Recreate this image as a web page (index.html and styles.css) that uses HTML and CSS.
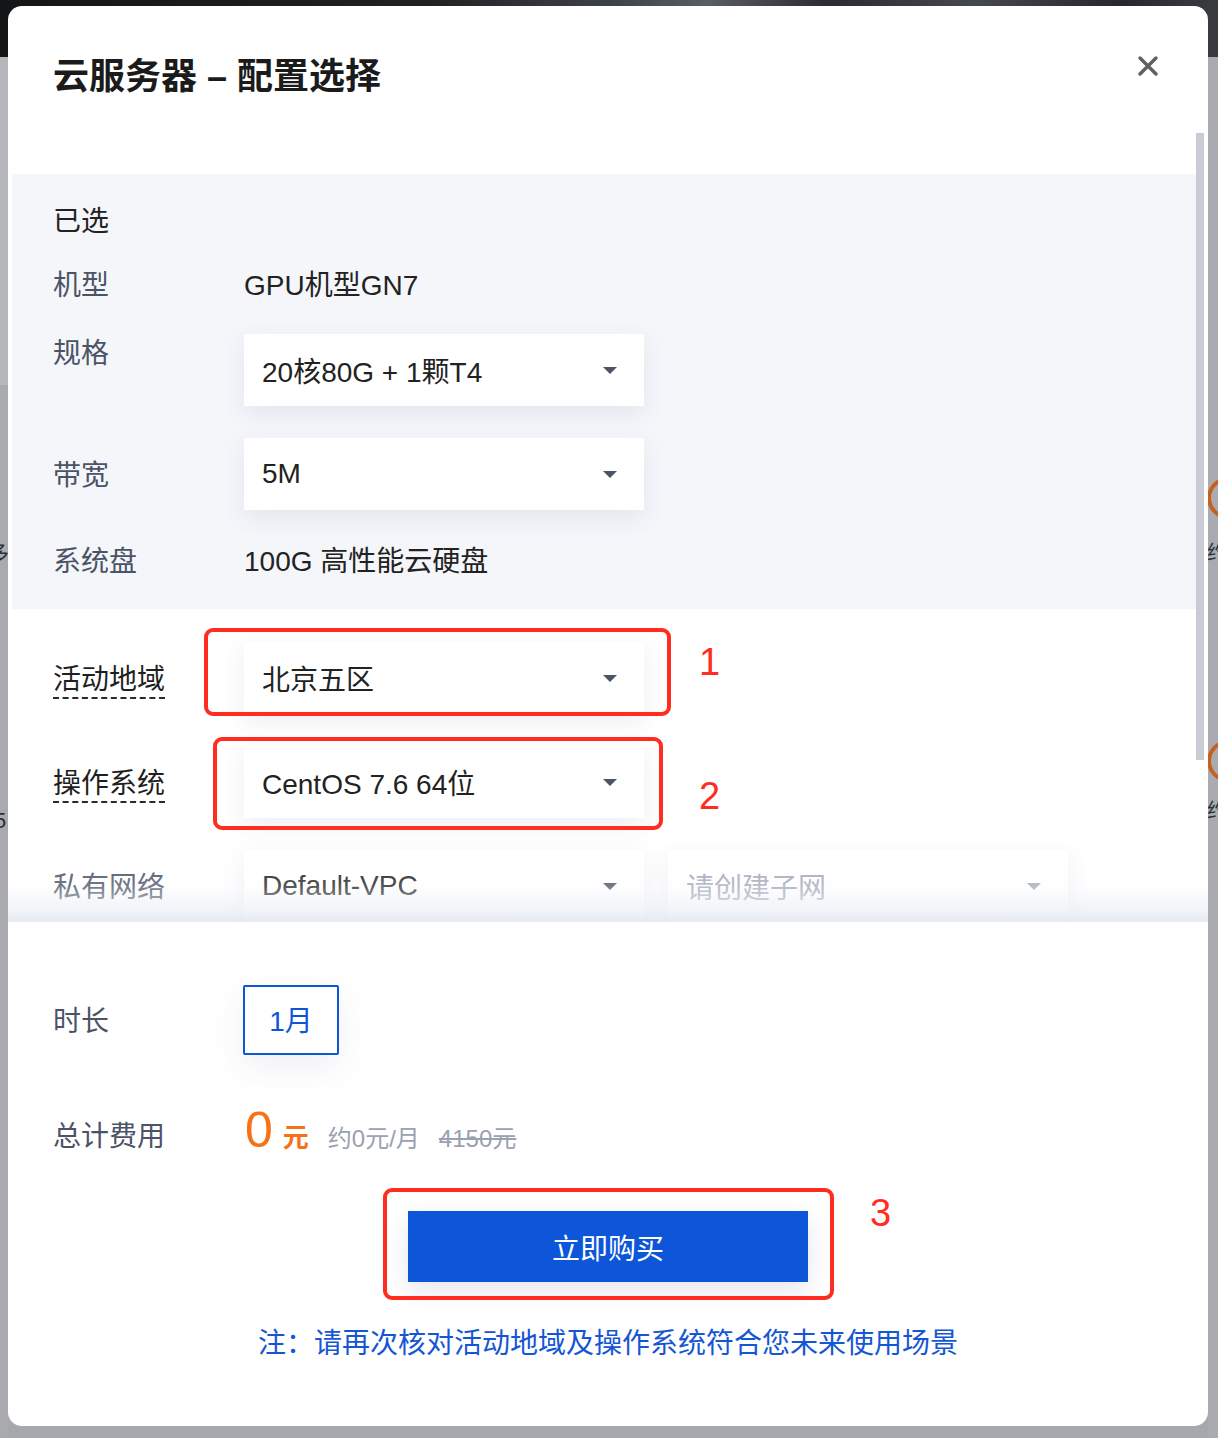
FILE: index.html
```html
<!DOCTYPE html>
<html lang="zh-CN">
<head>
<meta charset="utf-8">
<title>云服务器 – 配置选择</title>
<link rel="stylesheet" href="styles.css">
</head>
<body>
<div class="backdrop">
  <div class="bg-top"></div>
  <div class="bg-main">
    <div class="bg-left"><span class="frag f1">多</span><span class="frag f2">5</span></div>
    <div class="bg-right"><span class="ring r1"></span><span class="frag f3">约</span><span class="ring r2"></span><span class="frag f4">约</span></div>
  </div>
</div>

<div class="modal">
  <header class="modal-head">
    <h1 class="title">云服务器 – 配置选择</h1>
    <button class="close" aria-label="关闭">
      <svg width="22" height="22" viewBox="0 0 22 22"><path d="M3 3L19 19M19 3L3 19" stroke="#606060" stroke-width="3.4" stroke-linecap="round"/></svg>
    </button>
  </header>

  <div class="scroll">
    <div class="scroll-inner">
      <section class="selected">
        <div class="row r-head">已选</div>
        <div class="row r-model"><span class="label">机型</span><span class="value">GPU机型GN7</span></div>
        <div class="row r-spec"><span class="label">规格</span><div class="select">20核80G + 1颗T4<i class="caret"></i></div></div>
        <div class="row r-band"><span class="label">带宽</span><div class="select">5M<i class="caret"></i></div></div>
        <div class="row r-disk"><span class="label">系统盘</span><span class="value">100G 高性能云硬盘</span></div>
      </section>
      <section class="opts">
        <div class="row r-region">
          <span class="label dashed"><span class="dash">活动地域</span></span>
          <div class="select">北京五区<i class="caret"></i><span class="mark m1"></span><span class="num n1">1</span></div>
        </div>
        <div class="row r-os">
          <span class="label dashed"><span class="dash">操作系统</span></span>
          <div class="select">CentOS 7.6 64位<i class="caret"></i><span class="mark m2"></span><span class="num n2">2</span></div>
        </div>
        <div class="row r-vpc">
          <span class="label">私有网络</span>
          <div class="select">Default-VPC<i class="caret"></i></div>
          <div class="select placeholder">请创建子网<i class="caret light"></i></div>
        </div>
      </section>
    </div>
    <div class="fade"></div>
    <div class="thumb"></div>
  </div>

  <div class="foot">
    <div class="f-row f-dur"><span class="label">时长</span><button class="dur">1月</button></div>
    <div class="f-row f-total">
      <span class="label">总计费用</span>
      <span class="price-group">
        <span class="price">0</span><span class="yuan">元</span><span class="monthly">约0元/月</span><span class="orig">4150元</span>
      </span>
    </div>
    <div class="buy-wrap">
      <button class="buy">立即购买</button>
      <span class="mark m3"></span><span class="num n3">3</span>
    </div>
    <p class="note">注：请再次核对活动地域及操作系统符合您未来使用场景</p>
  </div>
</div>
</body>
</html>
```

FILE: styles.css
```css
* { box-sizing: border-box; }

html, body {
  margin: 0;
  padding: 0;
  height: 1438px;
  overflow: hidden;
}

body {
  font-family: "Liberation Sans", "Noto Sans CJK SC", sans-serif;
  color: #222;
  background: #a7a9ae;
}

/* ---------- backdrop behind the overlay ---------- */
.backdrop {
  height: 1438px;
  display: flex;
  flex-direction: column;
}
.bg-top {
  height: 57px;
  flex: none;
  background: linear-gradient(90deg, #141517 0%, #1f2123 35%, #3e4145 50%, #5a5d62 58%, #2a2c2f 68%, #45484c 80%, #26282b 92%, #3a3c40 100%);
}
.bg-main {
  flex: 1;
  display: flex;
  justify-content: space-between;
  background: #a6a8ad;
}
.bg-left {
  width: 8px;
  overflow: hidden;
  background: linear-gradient(180deg, #b6b7ba 0px, #b6b7ba 328px, #a8aaae 328px, #a8aaae 1381px);
}
.bg-right {
  width: 10px;
  overflow: hidden;
  background: #a9abb0;
}
.frag {
  display: block;
  font-family: "Noto Sans CJK SC", sans-serif;
  font-size: 22px;
  line-height: 22px;
  color: #2a2f3a;
  white-space: nowrap;
}
.f1 { margin-top: 483px; margin-left: -13px; }
.f2 { margin-top: 248px; margin-left: -6px; font-family: "Liberation Sans", sans-serif; }
.f3 { margin-top: 23px; margin-left: -1px; font-size: 20px; line-height: 20px; }
.f4 { margin-top: 18px; margin-left: -1px; font-size: 20px; line-height: 20px; }
.ring {
  display: block;
  width: 42px;
  height: 42px;
  margin-left: -1px;
  border: 4px solid #c6611d;
  border-radius: 50%;
}
.r1 { margin-top: 420px; }
.r2 { margin-top: 178px; }

/* ---------- modal ---------- */
.modal {
  position: absolute;
  left: 8px;
  top: 6px;
  width: 1200px;
  height: 1420px;
  background: #fff;
  border-radius: 14px;
  overflow: hidden;
  display: flex;
  flex-direction: column;
}

.modal-head {
  height: 127px;
  flex: none;
  display: flex;
  justify-content: space-between;
  align-items: flex-start;
  padding: 0 49px 0 45px;
}
.title {
  margin: 46px 0 0;
  font-size: 36px;
  line-height: 50px;
  font-weight: 700;
  color: #1b1b1b;
}
.close {
  margin-top: 49px;
  width: 22px;
  height: 22px;
  padding: 0;
  border: 0;
  background: transparent;
  display: block;
}
.close svg { display: block; }

/* ---------- scroll area ---------- */
.scroll {
  position: relative;
  height: 789px;
  flex: none;
  overflow: hidden;
}
.scroll-inner {
  padding: 41px 12px 0 4px;
}
.thumb {
  position: absolute;
  top: 0;
  right: 4px;
  width: 8px;
  height: 627px;
  background: #c9ccd5;
}
.fade {
  position: absolute;
  left: 0;
  right: 0;
  bottom: 0;
  height: 70px;
  pointer-events: none;
  background: linear-gradient(180deg, rgba(255,255,255,0) 0%, rgba(250,251,253,0.22) 48%, rgba(236,239,245,0.7) 82%, rgba(228,233,241,0.92) 100%);
}

.row {
  display: flex;
  align-items: center;
}
.label {
  width: 191px;
  flex: none;
  font-size: 28px;
  line-height: 40px;
  padding-top: 4px;
  color: #4b5366;
}
.value {
  font-size: 28px;
  line-height: 40px;
  padding-top: 4px;
  color: #222;
}

.selected {
  background: #f5f6fa;
  padding: 24px 0 27px 41px;
}
.r-head {
  font-size: 28px;
  line-height: 40px;
  padding-top: 4px;
  color: #222;
}
.r-model { margin-top: 20px; }
.r-spec { margin-top: 24px; align-items: flex-start; }
.r-spec .select { margin-top: 4px; }
.r-band { margin-top: 32px; }
.r-disk { margin-top: 28px; }

.select {
  position: relative;
  width: 400px;
  height: 72px;
  flex: none;
  display: flex;
  align-items: center;
  justify-content: space-between;
  padding: 0 27px 0 18px;
  background: #fff;
  font-size: 28px;
  color: #222;
  box-shadow: 0 8px 24px rgba(50, 70, 120, 0.09);
}
.caret {
  width: 0;
  height: 0;
  border-left: 7px solid transparent;
  border-right: 7px solid transparent;
  border-top: 7px solid #4b5366;
}
.caret.light { border-top-color: #a3aaba; }
.placeholder { color: #a3aaba; margin-left: 24px; }

.opts {
  padding-left: 41px;
  padding-top: 33px;
}
.r-os { margin-top: 32px; }
.r-vpc { margin-top: 32px; }

.label.dashed {
  display: flex;
  padding-top: 0;
  color: #1f1f1f;
}
.dash {
  padding-top: 6px;
  line-height: 34px;
  border-bottom: 2px dashed #2a2a2a;
}

/* red annotation marks */
.mark {
  position: absolute;
  border: 4px solid #ff2d20;
  border-radius: 9px;
  pointer-events: none;
}
.m1 { left: -40px; right: -27px; top: -14px; bottom: -2px; }
.m2 { left: -31px; right: -19px; top: -9px; bottom: -12px; }
.m3 { left: -25px; right: -26px; top: -23px; bottom: -18px; }
.num {
  position: absolute;
  font-family: "Liberation Sans", sans-serif;
  font-size: 38px;
  line-height: 38px;
  color: #ff2d20;
}
.n1 { left: 455px; top: 1px; }
.n2 { left: 455px; top: 31px; }
.n3 { left: 462px; top: -17px; }

/* ---------- footer ---------- */
.foot {
  flex: 1;
  display: flex;
  flex-direction: column;
}
.f-row {
  display: flex;
  align-items: center;
  padding-left: 45px;
}
.f-row .label { width: 190px; }
.f-dur {
  margin-top: 63px;
}
.dur {
  width: 96px;
  height: 70px;
  border: 2px solid #0e55d8;
  border-radius: 2px;
  background: #fff;
  color: #0e55d8;
  font-family: inherit;
  font-size: 28px;
  padding: 0 0 2px;
  box-shadow: 0 12px 34px rgba(50, 70, 120, 0.08);
}
.f-total {
  margin-top: 55px;
}
.f-total .label { width: 192px; }
.price-group {
  display: flex;
  align-items: baseline;
  line-height: 40px;
}
.price {
  font-size: 50px;
  color: #f57316;
}
.yuan {
  margin-left: 10px;
  font-size: 26px;
  font-weight: 700;
  color: #f57316;
}
.monthly {
  margin-left: 19px;
  font-size: 24px;
  color: #9aa1b0;
}
.orig {
  margin-left: 19px;
  font-size: 24px;
  color: #9aa1b0;
  text-decoration: line-through;
}

.buy-wrap {
  position: relative;
  align-self: center;
  margin-top: 52px;
}
.buy {
  display: block;
  width: 400px;
  height: 71px;
  border: 0;
  padding: 0;
  background: #0e56d9;
  color: #fff;
  font-family: inherit;
  font-size: 28px;
  box-shadow: 0 8px 22px rgba(30, 50, 110, 0.12);
}

.note {
  margin: 42px 0 0;
  text-align: center;
  font-size: 28px;
  line-height: 40px;
  color: #1456d4;
}
```
